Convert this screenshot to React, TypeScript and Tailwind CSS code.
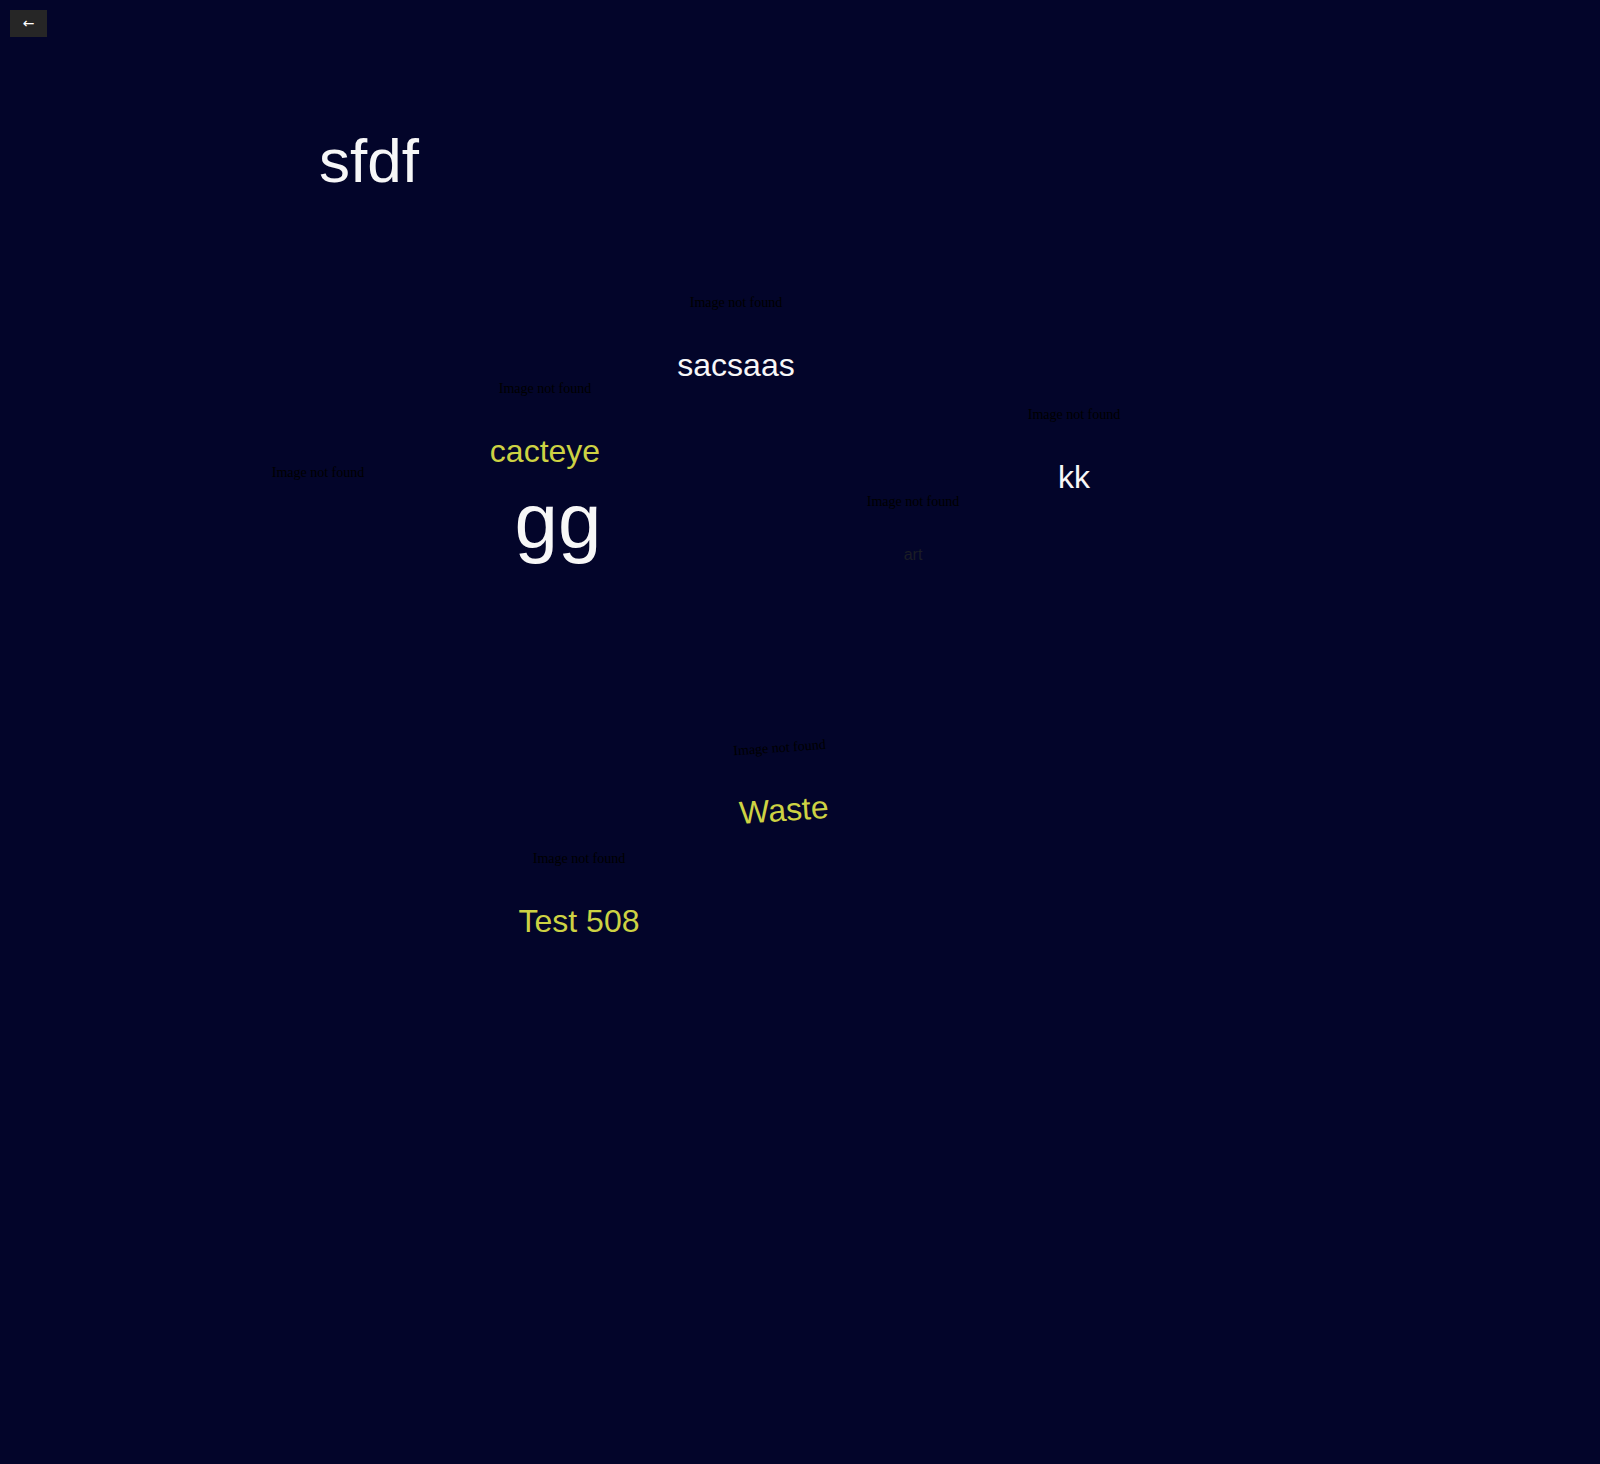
import React from 'react';

type Word = {
  label?: string;
  cx: number;
  top: number;
  size: 'lg' | 'sm';
  tone: 'white' | 'yellow' | 'dim';
  tilt?: boolean;
  alt?: boolean;
};

const words: Word[] = [
  { label: 'sacsaas', cx: 736, top: 295, size: 'lg', tone: 'white', alt: true },
  { label: 'cacteye', cx: 545, top: 381, size: 'lg', tone: 'yellow', alt: true },
  { label: 'kk', cx: 1074, top: 407, size: 'lg', tone: 'white', alt: true },
  { label: 'art', cx: 913, top: 494, size: 'sm', tone: 'dim', alt: true },
  { label: 'Waste', cx: 782, top: 740, size: 'lg', tone: 'yellow', tilt: true, alt: true },
  { label: 'Test 508', cx: 579, top: 851, size: 'lg', tone: 'yellow', alt: true },
  { cx: 318, top: 465, size: 'sm', tone: 'dim', alt: true },
];

const toneClass = {
  white: 'text-[#f7f7f7]',
  yellow: 'text-[#cdd243]',
  dim: 'text-[#1b1d26]',
};

const sizeClass = {
  lg: 'text-[32px] leading-[36px]',
  sm: 'text-[16px] leading-[18px]',
};

const WordItem: React.FC<{ word: Word }> = ({ word }) => (
  <div
    className={`absolute -translate-x-1/2 flex flex-col items-center whitespace-nowrap ${word.tilt ? '-rotate-4' : ''}`}
    style={{ left: word.cx, top: word.top }}
  >
    {word.alt && (
      <span className="block text-[14px] leading-[16px] text-black font-['Liberation_Serif',serif]">
        Image not found
      </span>
    )}
    {word.label && (
      <span className={`mt-9 block ${sizeClass[word.size]} ${toneClass[word.tone]}`}>{word.label}</span>
    )}
  </div>
);

export default function App() {
  return (
    <div className="relative w-full h-[1464px] bg-[#03052a] overflow-hidden font-['Liberation_Sans',Arial,sans-serif]">
      <button
        type="button"
        className="absolute left-[10px] top-[10px] w-[37px] h-[27px] bg-[#262626] text-white text-[14px] flex items-center justify-center font-['DejaVu_Sans',sans-serif]"
        aria-label="Back"
      >
        ←
      </button>

      {/* big words without images */}
      <span
        className="absolute -translate-x-1/2 text-[62px] leading-[71px] text-[#f7f7f7] whitespace-nowrap"
        style={{ left: 369, top: 125 }}
      >
        sfdf
      </span>
      <span
        className="absolute -translate-x-1/2 text-[78px] leading-[90px] text-[#f7f7f7] whitespace-nowrap"
        style={{ left: 558, top: 476 }}
      >
        gg
      </span>

      {words.map((w, i) => (
        <WordItem key={i} word={w} />
      ))}
    </div>
  );
}
